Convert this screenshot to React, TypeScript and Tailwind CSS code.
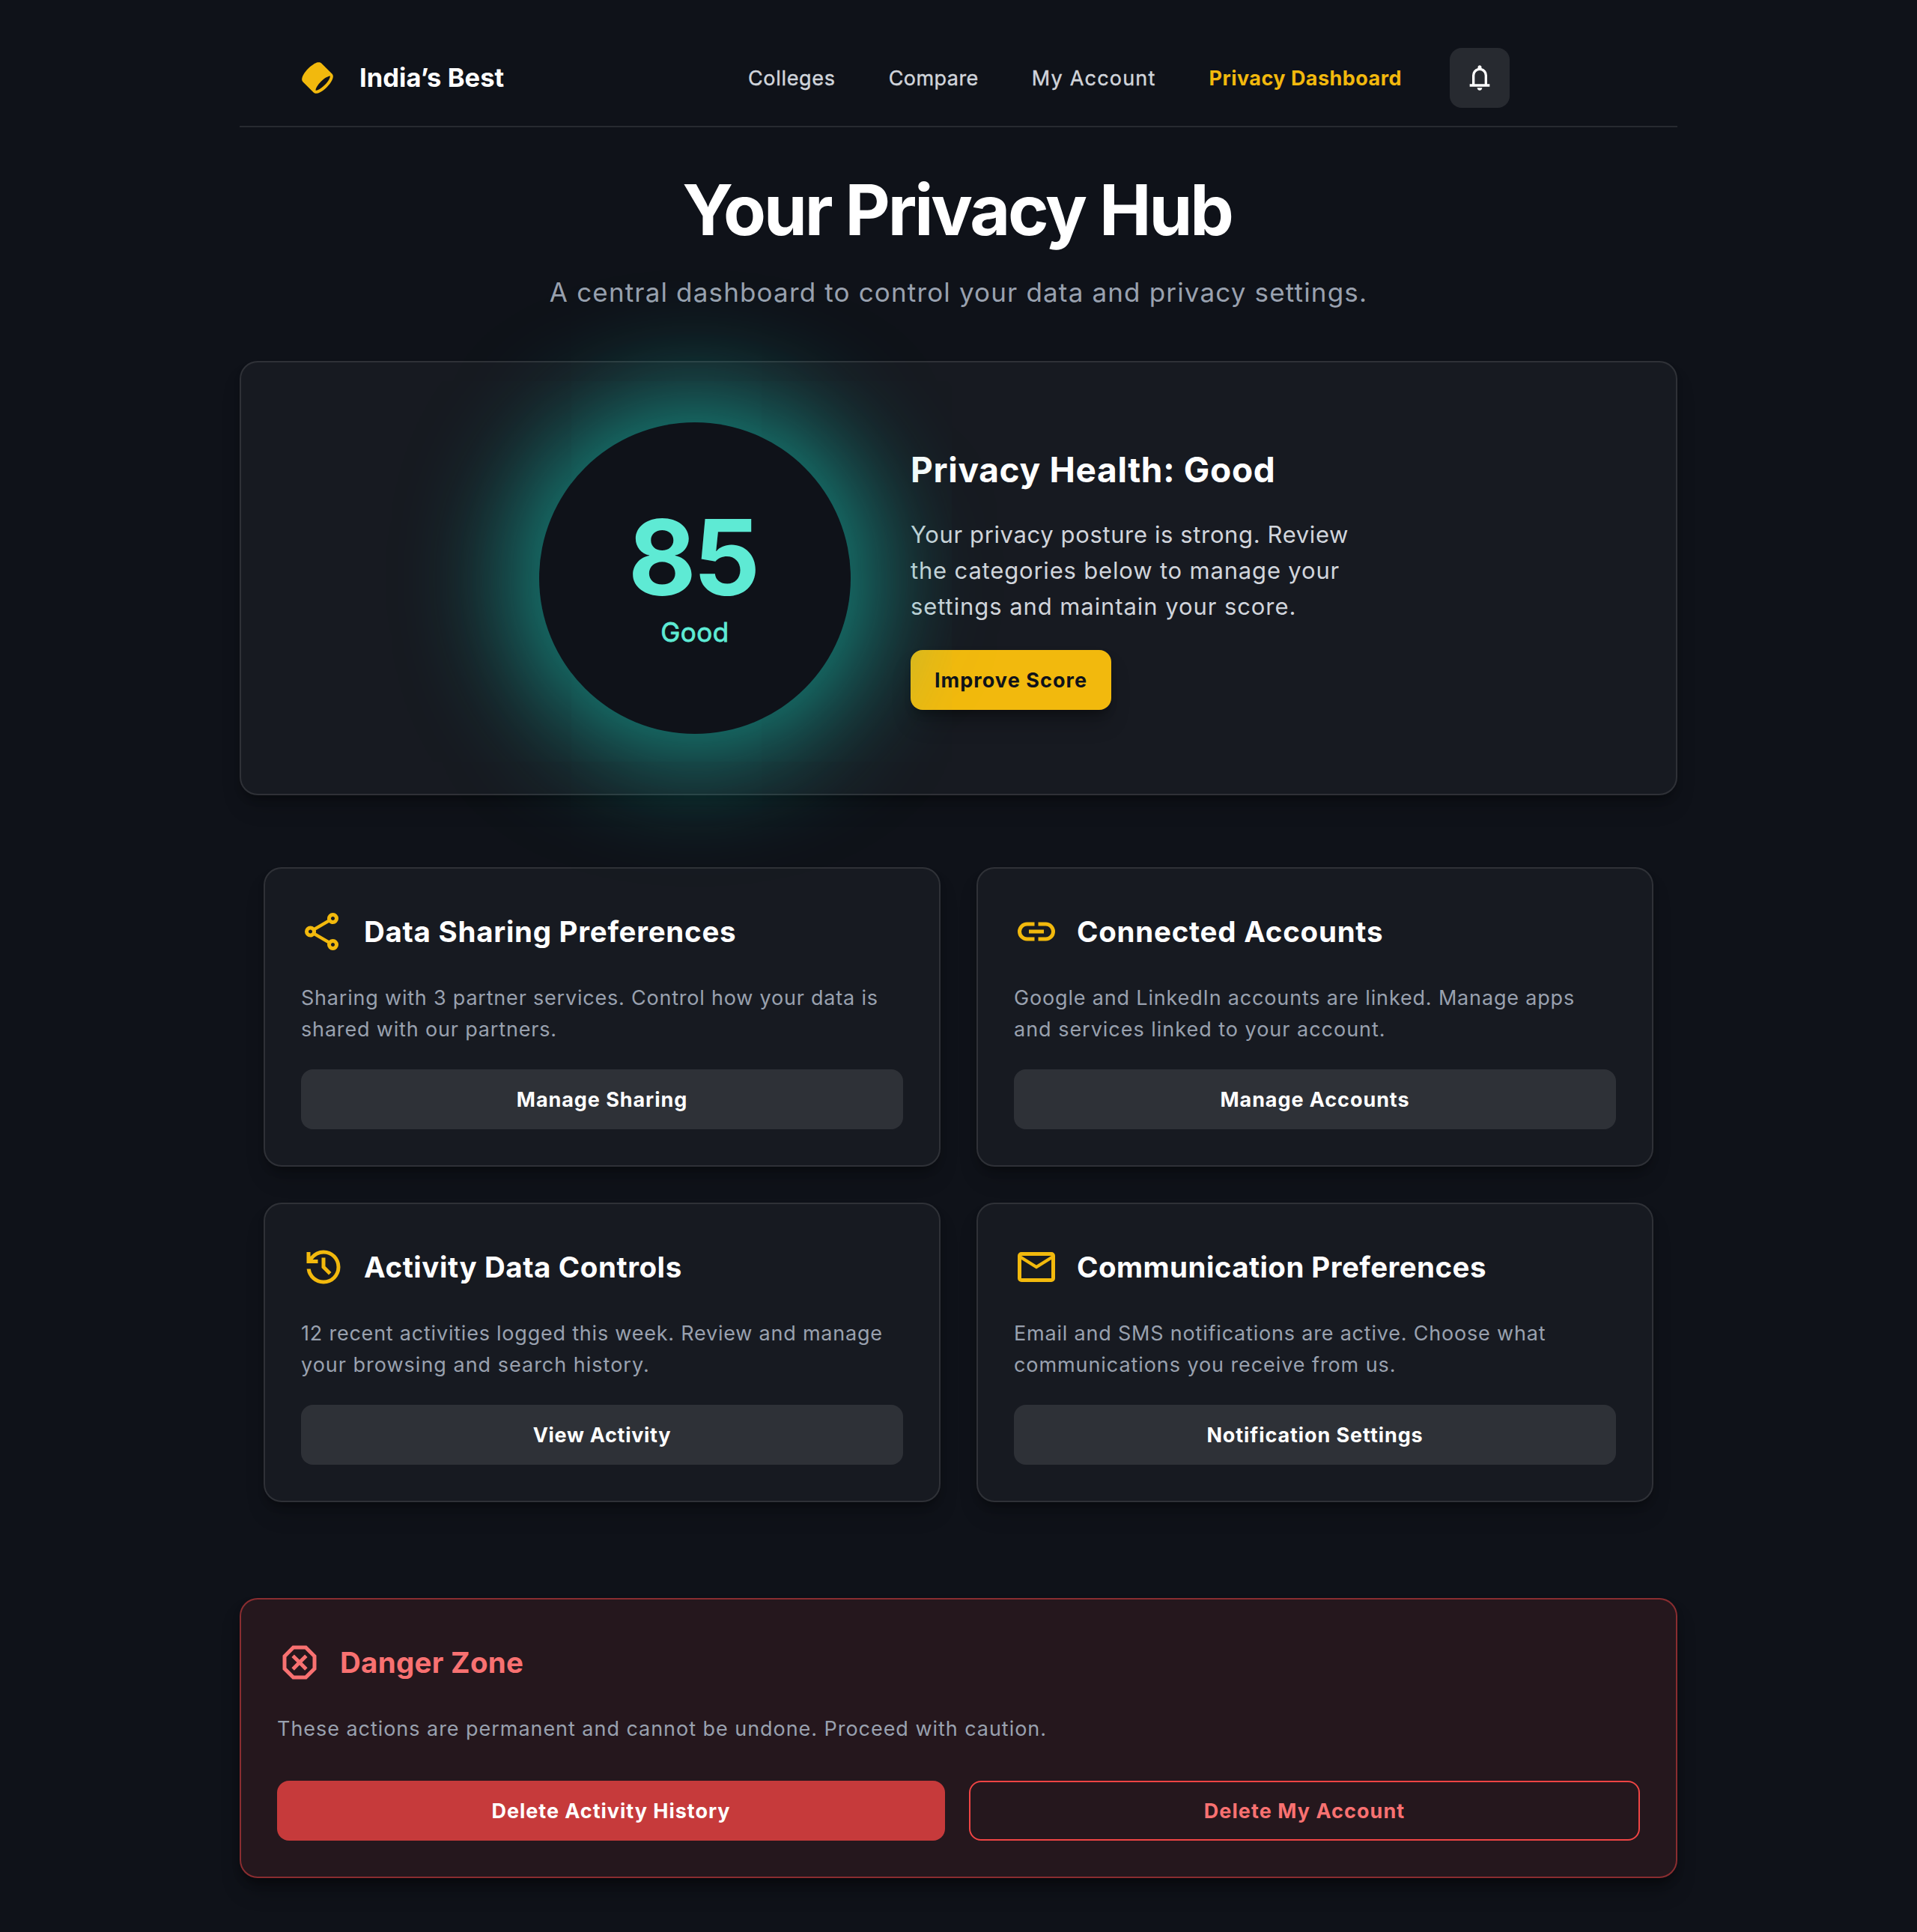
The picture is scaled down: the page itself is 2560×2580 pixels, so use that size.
import type { ReactNode } from "react";

const ICONS = {
  bell: "M160-200v-80h80v-280q0-83 50-147.5T420-792v-28q0-25 17.5-42.5T480-880q25 0 42.5 17.5T540-820v28q80 20 130 84.5T720-560v280h80v80H160Zm320-300Zm0 420q-33 0-56.5-23.5T400-160h160q0 33-23.5 56.5T480-80ZM320-280h320v-280q0-66-47-113t-113-47q-66 0-113 47t-47 113v280Z",
  share:
    "M680-80q-50 0-85-35t-35-85q0-6 3-28L282-392q-16 15-37 23.5t-45 8.5q-50 0-85-35t-35-85q0-50 35-85t85-35q24 0 45 8.5t37 23.5l281-164q-2-7-2.5-13.5T560-760q0-50 35-85t85-35q50 0 85 35t35 85q0 50-35 85t-85 35q-24 0-45-8.5T598-672L317-508q2 7 2.5 13.5t.5 14.5q0 8-.5 14.5T317-452l281 164q16-15 37-23.5t45-8.5q50 0 85 35t35 85q0 50-35 85t-85 35Zm0-80q17 0 28.5-11.5T720-200q0-17-11.5-28.5T680-240q-17 0-28.5 11.5T640-200q0 17 11.5 28.5T680-160ZM200-440q17 0 28.5-11.5T240-480q0-17-11.5-28.5T200-520q-17 0-28.5 11.5T160-480q0 17 11.5 28.5T200-440Zm480-280q17 0 28.5-11.5T720-760q0-17-11.5-28.5T680-800q-17 0-28.5 11.5T640-760q0 17 11.5 28.5T680-720Z",
  link: "M440-280H280q-83 0-141.5-58.5T80-480q0-83 58.5-141.5T280-680h160v80H280q-50 0-85 35t-35 85q0 50 35 85t85 35h160v80ZM320-440v-80h320v80H320Zm200 160v-80h160q50 0 85-35t35-85q0-50-35-85t-85-35H520v-80h160q83 0 141.5 58.5T880-480q0 83-58.5 141.5T680-280H520Z",
  history:
    "M480-120q-138 0-240.5-91.5T122-440h82q14 104 92.5 172T480-200q117 0 198.5-81.5T760-480q0-117-81.5-198.5T480-760q-69 0-129 32t-101 88h110v80H120v-240h80v94q51-64 124.5-99T480-840q75 0 140.5 28.5t114 77q48.5 48.5 77 114T840-480q0 75-28.5 140.5t-77 114q-48.5 48.5-114 77T480-120Zm112-192L440-464v-216h80v184l128 128-56 56Z",
  mail: "M160-160q-33 0-56.5-23.5T80-240v-480q0-33 23.5-56.5T160-800h640q33 0 56.5 23.5T880-720v480q0 33-23.5 56.5T800-160H160Zm320-280L160-640v400h640v-400L480-440Zm0-80 320-200H160l320 200ZM160-640v-80 480-400Z",
  danger:
    "M330-120 120-330v-300l210-210h300l210 210v300L630-120H330Zm36-190 114-114 114 114 56-56-114-114 114-114-56-56-114 114-114-114-56 56 114 114-114 114 56 56Zm-2 110h232l164-164v-232L596-760H364L200-596v232l164 164Zm116-280Z",
};

function Icon({ name, className }: { name: keyof typeof ICONS; className: string }) {
  return (
    <svg viewBox="0 -960 960 960" fill="currentColor" className={className}>
      <path d={ICONS[name]} />
    </svg>
  );
}

function Logo() {
  return (
    <svg viewBox="0 0 48 48" fill="currentColor" className="size-12 text-[#f2b90d]">
      <path
        clipRule="evenodd"
        fillRule="evenodd"
        d="M39.475 21.6262C40.358 21.4363 40.6863 21.5589 40.7581 21.5934C40.7876 21.655 40.8547 21.857 40.8082 22.3336C40.7408 23.0255 40.4502 24.0046 39.8572 25.2301C38.6799 27.6631 36.5085 30.6631 33.5858 33.5858C30.6631 36.5085 27.6632 38.6799 25.2301 39.8572C24.0046 40.4502 23.0255 40.7407 22.3336 40.8082C21.8571 40.8547 21.6551 40.7875 21.5934 40.7581C21.5589 40.6863 21.4363 40.358 21.6262 39.475C21.8562 38.4054 22.4689 36.9657 23.5038 35.2817C24.7575 33.2417 26.5497 30.9744 28.7621 28.762C30.9744 26.5497 33.2417 24.7574 35.2817 23.5037C36.9657 22.4689 38.4054 21.8562 39.475 21.6262ZM4.41189 29.2403L18.7597 43.5881C19.8813 44.7097 21.4027 44.9179 22.7217 44.7893C24.0585 44.659 25.5148 44.1631 26.9723 43.4579C29.9052 42.0387 33.2618 39.5667 36.4142 36.4142C39.5667 33.2618 42.0387 29.9052 43.4579 26.9723C44.1631 25.5148 44.659 24.0585 44.7893 22.7217C44.9179 21.4027 44.7097 19.8813 43.5881 18.7597L29.2403 4.41187C27.8527 3.02428 25.8765 3.02573 24.2861 3.36776C22.6081 3.72863 20.7334 4.58419 18.8396 5.74801C16.4978 7.18716 13.9881 9.18353 11.5858 11.5858C9.18354 13.988 7.18717 16.4978 5.74802 18.8396C4.58421 20.7334 3.72865 22.6081 3.36778 24.2861C3.02574 25.8765 3.02429 27.8527 4.41189 29.2403Z"
      />
    </svg>
  );
}

const NAV = [
  { label: "Colleges", className: "tracking-[0.69px]" },
  { label: "Compare", className: "tracking-[0.45px]" },
  { label: "My Account", className: "tracking-[1.2px]" },
];

type CardData = {
  icon: keyof typeof ICONS;
  title: string;
  titleClass: string;
  lines: { text: string; className: string }[];
  action: string;
  actionClass: string;
};

const CARDS: CardData[] = [
  {
    icon: "share",
    title: "Data Sharing Preferences",
    titleClass: "tracking-[0.72px]",
    lines: [
      { text: "Sharing with 3 partner services. Control how your data is", className: "tracking-[0.79px]" },
      { text: "shared with our partners.", className: "tracking-[0.83px]" },
    ],
    action: "Manage Sharing",
    actionClass: "tracking-[0.92px]",
  },
  {
    icon: "link",
    title: "Connected Accounts",
    titleClass: "tracking-[0.75px]",
    lines: [
      { text: "Google and LinkedIn accounts are linked. Manage apps", className: "tracking-[0.83px]" },
      { text: "and services linked to your account.", className: "tracking-[0.98px]" },
    ],
    action: "Manage Accounts",
    actionClass: "tracking-[0.93px]",
  },
  {
    icon: "history",
    title: "Activity Data Controls",
    titleClass: "tracking-[0.57px]",
    lines: [
      { text: "12 recent activities logged this week. Review and manage", className: "tracking-[0.78px]" },
      { text: "your browsing and search history.", className: "tracking-[1px]" },
    ],
    action: "View Activity",
    actionClass: "tracking-[0.7px]",
  },
  {
    icon: "mail",
    title: "Communication Preferences",
    titleClass: "tracking-[0.43px]",
    lines: [
      { text: "Email and SMS notifications are active. Choose what", className: "tracking-[0.8px]" },
      { text: "communications you receive from us.", className: "tracking-[0.92px]" },
    ],
    action: "Notification Settings",
    actionClass: "tracking-[0.9px]",
  },
];

function CardTitle({ icon, iconClass, className, children }: { icon: keyof typeof ICONS; iconClass: string; className: string; children: ReactNode }) {
  return (
    <div className="flex h-[72px] items-center gap-6">
      <Icon name={icon} className={`size-[60px] shrink-0 ${iconClass}`} />
      <h3 className={`whitespace-nowrap text-[38.5px] font-bold leading-[50px] ${className}`}>{children}</h3>
    </div>
  );
}

function SettingsCard({ card }: { card: CardData }) {
  return (
    <div className="flex flex-col gap-8 rounded-3xl border-2 border-white/10 bg-white/[0.035] p-12 shadow-[0_8px_12px_-4px_rgba(0,0,0,0.3),0_20px_30px_-6px_rgba(0,0,0,0.18)]">
      <CardTitle icon={card.icon} iconClass="text-[#f2b90d]" className={`text-white ${card.titleClass}`}>
        {card.title}
      </CardTitle>
      <p className="text-[27px] leading-[42px] text-gray-400">
        {card.lines.map((line) => (
          <span key={line.text} className={`block whitespace-nowrap ${line.className}`}>
            {line.text}
          </span>
        ))}
      </p>
      <button className={`h-20 rounded-2xl bg-white/10 pt-0.5 text-[27px] font-bold text-white ${card.actionClass}`}>{card.action}</button>
    </div>
  );
}

export default function App() {
  return (
    <div className="flex min-h-screen justify-center bg-[#0f1219] pt-10 font-['Inter','Liberation_Sans',sans-serif]">
      <main className="w-[1920px]">
        <header className="flex h-[130px] items-center justify-between border-b-2 border-white/10 pl-20 pr-56">
          <div className="flex items-center gap-8">
            <Logo />
            <span className="text-[34.5px] font-bold tracking-[0.05px] text-white">India’s Best</span>
          </div>
          <div className="flex items-center gap-16">
            <nav className="flex items-center gap-[71px] pt-0.5 text-[27px]">
              {NAV.map((item) => (
                <a key={item.label} className={`text-gray-300 [-webkit-text-stroke:0.4px_#d1d5db] ${item.className}`}>
                  {item.label}
                </a>
              ))}
              <a className="font-bold tracking-[0.46px] text-[#f2b90d]">Privacy Dashboard</a>
            </nav>
            <button className="flex size-20 items-center justify-center rounded-2xl bg-white/10 text-white">
              <Icon name="bell" className="size-10" />
            </button>
          </div>
        </header>

        <section className="flex flex-col items-center pb-16 pt-[62px]">
          <h1 className="pr-1 text-[93px] font-bold leading-[96px] tracking-[-3.06px] text-white">Your Privacy Hub</h1>
          <p className="mt-[34px] text-[35px] leading-[56px] tracking-[1.16px] text-gray-400">
            A central dashboard to control your data and privacy settings.
          </p>
        </section>

        <section className="flex items-center justify-center gap-20 rounded-3xl border-2 border-white/10 bg-white/[0.035] p-20 shadow-[0_8px_12px_-4px_rgba(0,0,0,0.3),0_20px_30px_-6px_rgba(0,0,0,0.18)]">
          <div className="relative flex size-[416px] flex-col items-center justify-center rounded-full bg-[#0f1219] text-[#5eead4] shadow-[0_0_146px_36px_rgba(20,184,166,0.7)]">
            <span className="pr-1.5 text-[140px] font-bold leading-[144px] tracking-[-4.12px]">85</span>
            <span className="text-[35px] leading-[56px] tracking-[0.52px] [-webkit-text-stroke:0.8px_#5eead4]">Good</span>
          </div>
          <div className="flex w-[624px] flex-col items-start gap-8">
            <h2 className="text-[46px] font-bold leading-[62px] tracking-[0.68px] text-white">Privacy Health: Good</h2>
            <p className="whitespace-nowrap pb-0.5 text-[31px] leading-[48px] text-gray-300">
              <span className="block tracking-[0.62px]">Your privacy posture is strong. Review</span>
              <span className="block tracking-[0.82px]">the categories below to manage your</span>
              <span className="block tracking-[0.92px]">settings and maintain your score.</span>
            </p>
            <button className="h-20 w-[268px] rounded-2xl bg-[#f2b90d] pt-0.5 text-[27px] font-bold tracking-[1.06px] text-[#0f1219] shadow-[0_8px_12px_-4px_rgba(0,0,0,0.3),0_20px_30px_-6px_rgba(0,0,0,0.25)]">
              Improve Score
            </button>
          </div>
        </section>

        <section className="grid grid-cols-2 gap-12 px-8 pt-24">
          {CARDS.map((card) => (
            <SettingsCard key={card.title} card={card} />
          ))}
        </section>

        <section className="mt-32 flex flex-col rounded-3xl border-2 border-[#ef4444]/50 bg-[#ef4444]/10 p-12 shadow-[0_8px_12px_-2px_rgba(0,0,0,0.3),0_20px_30px_-6px_rgba(0,0,0,0.3)]">
          <CardTitle icon="danger" iconClass="text-[#f87171]" className="tracking-[0.27px] text-[#f87171]">
            Danger Zone
          </CardTitle>
          <p className="mt-8 text-[27px] leading-[42px] tracking-[0.955px] text-gray-400">
            These actions are permanent and cannot be undone. Proceed with caution.
          </p>
          <div className="mt-12 flex gap-8">
            <button className="h-20 w-[892px] rounded-2xl bg-[#ef4444]/80 pt-0.5 text-[27px] font-bold tracking-[0.97px] text-white">
              Delete Activity History
            </button>
            <button className="h-20 w-[896px] rounded-2xl border-2 border-[#ef4444] pt-0.5 text-[27px] font-bold tracking-[1.05px] text-[#f87171]">
              Delete My Account
            </button>
          </div>
        </section>
      </main>
    </div>
  );
}
